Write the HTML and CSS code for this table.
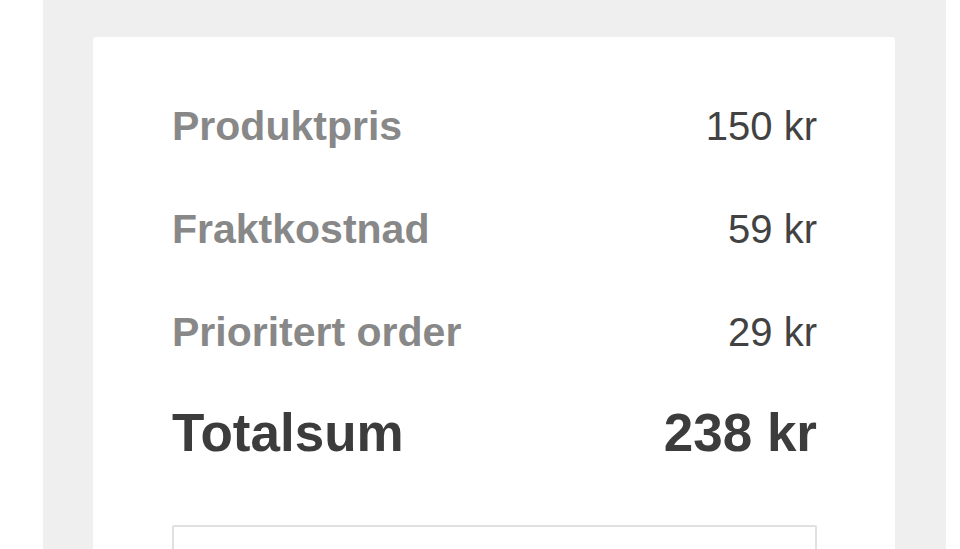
FILE: index.html
```html
<!DOCTYPE html>
<html lang="no">
<head>
<meta charset="utf-8">
<title>Ordresammendrag</title>
<link rel="stylesheet" href="styles.css">
</head>
<body>
<div class="page">
  <div class="card">
    <div class="row">
      <span class="label">Produktpris</span>
      <span class="value">150 kr</span>
    </div>
    <div class="row">
      <span class="label">Fraktkostnad</span>
      <span class="value">59 kr</span>
    </div>
    <div class="row">
      <span class="label">Prioritert order</span>
      <span class="value">29 kr</span>
    </div>
    <div class="row total">
      <span class="label">Totalsum</span>
      <span class="value">238 kr</span>
    </div>
    <div class="box"></div>
  </div>
</div>
</body>
</html>
```

FILE: styles.css
```css
* { box-sizing: border-box; }
html, body { margin: 0; padding: 0; background: #ffffff; overflow: hidden; }
body {
  font-family: "Liberation Sans", Arial, Helvetica, sans-serif;
  height: 549px;
}
.page {
  margin-left: 43px;
  width: 903px;
  height: 549px;
  overflow: hidden;
  background: #efefef;
  padding: 37px 51px 0 50px;
}
.card {
  background: #ffffff;
  border-radius: 3px 3px 0 0;
  padding: 65px 78px 40px 79px;
  display: flex;
  flex-direction: column;
  gap: 55px;
}
.row {
  display: flex;
  justify-content: space-between;
  align-items: baseline;
  line-height: 48px;
}
.label {
  font-size: 41px;
  font-weight: bold;
  color: #888888;
}
.value {
  font-size: 40px;
  color: #424242;
}
.row.total {
  line-height: 60px;
  margin-top: -8px;
}
.row.total .label,
.row.total .value {
  font-size: 53px;
  font-weight: bold;
  color: #3c3c3c;
}
.box {
  flex-shrink: 0;
  margin-top: 7px;
  height: 80px;
  border: 2px solid #e0e0e0;
  border-radius: 2px;
}
```
